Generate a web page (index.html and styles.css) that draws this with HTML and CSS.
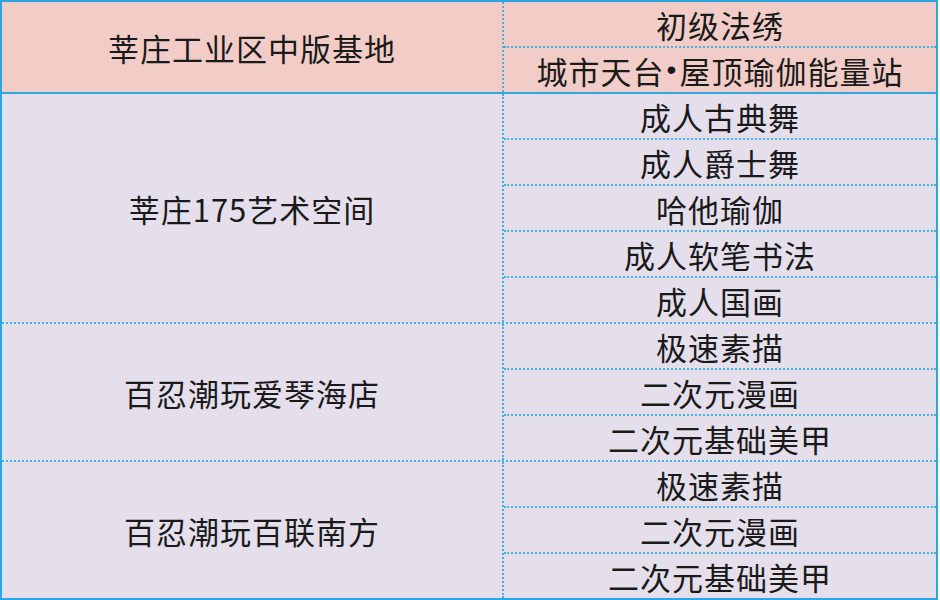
FILE: index.html
```html
<!DOCTYPE html>
<html lang="zh">
<head>
<meta charset="utf-8">
<title>课程表</title>
<link rel="stylesheet" href="styles.css">
</head>
<body>
<div class="sheet">
  <div class="group head">
    <div class="place span2">莘庄工业区中版基地</div>
    <div class="course">初级法绣</div>
    <div class="course last">城市天台<span class="dot">•</span>屋顶瑜伽能量站</div>
  </div>
  <div class="group dotted">
    <div class="place span5">莘庄175艺术空间</div>
    <div class="course">成人古典舞</div>
    <div class="course">成人爵士舞</div>
    <div class="course">哈他瑜伽</div>
    <div class="course">成人软笔书法</div>
    <div class="course last">成人国画</div>
  </div>
  <div class="group dotted">
    <div class="place span3">百忍潮玩爱琴海店</div>
    <div class="course">极速素描</div>
    <div class="course">二次元漫画</div>
    <div class="course last">二次元基础美甲</div>
  </div>
  <div class="group">
    <div class="place span3">百忍潮玩百联南方</div>
    <div class="course">极速素描</div>
    <div class="course">二次元漫画</div>
    <div class="course last">二次元基础美甲</div>
  </div>
</div>
</body>
</html>
```

FILE: styles.css
```css
html, body {
  margin: 0;
  padding: 0;
  background: #ffffff;
}

.sheet {
  box-sizing: border-box;
  width: 938px;
  height: 600px;
  border: 2px solid #2ba6e3;
  background: #e4dfeb;
  display: flex;
  flex-direction: column;
  font-family: "Noto Sans CJK SC", "Noto Sans", sans-serif;
  font-size: 31px;
  color: #1a1a1a;
  letter-spacing: 1px;
}

.group {
  display: grid;
  grid-template-columns: 502px 1fr;
  box-sizing: border-box;
}

.group.head {
  background: #f2cdc8;
  border-bottom: 2px solid #2ba6e3;
}

.group.dotted {
  border-bottom: 2px dotted #45b3e2;
}

.place {
  grid-column: 1;
  border-right: 2px dotted #45b3e2;
  display: flex;
  align-items: center;
  justify-content: center;
}

.span2 { grid-row: 1 / span 2; }
.span3 { grid-row: 1 / span 3; }
.span5 { grid-row: 1 / span 5; }

.course {
  grid-column: 2;
  box-sizing: border-box;
  height: 46px;
  border-bottom: 2px dotted #45b3e2;
  display: flex;
  align-items: center;
  justify-content: center;
  line-height: 1;
}

.course.last {
  height: 44px;
  border-bottom: none;
}

.dot {
  font-family: "Liberation Sans", sans-serif;
  font-size: 28px;
  padding: 0 2px;
}
```
